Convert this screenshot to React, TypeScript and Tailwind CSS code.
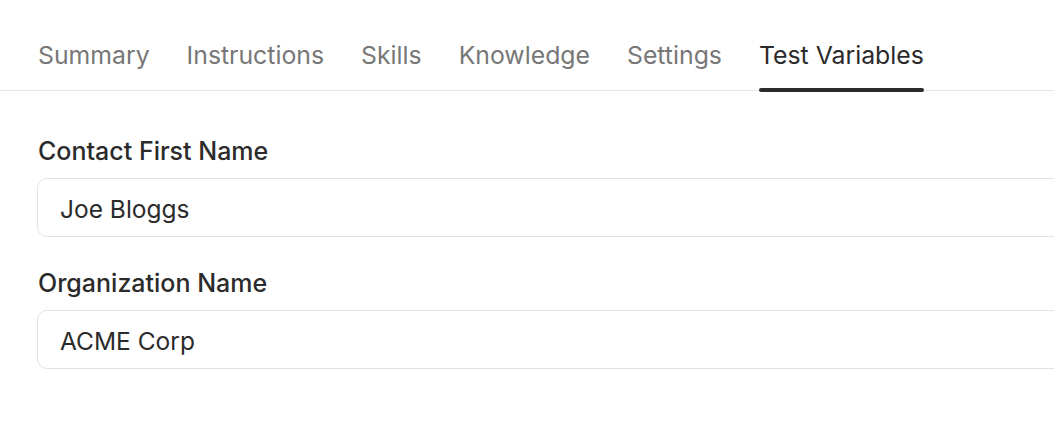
const tabs = ["Summary", "Instructions", "Skills", "Knowledge", "Settings", "Test Variables"];

const fields = [
  { label: "Contact First Name", value: "Joe Bloggs" },
  { label: "Organization Name", value: "ACME Corp" },
];

function App() {
  return (
    <div
      className="w-full h-[430px] overflow-hidden bg-white text-[#2b2b2b]"
      style={{ fontFamily: "Inter, 'Noto Sans', sans-serif" }}
    >
      <nav className="flex gap-[37px] pl-[38px] border-b border-[#e5e5e5]">
        {tabs.map((tab) => {
          const active = tab === "Test Variables";
          return (
            <button
              key={tab}
              className={
                active
                  ? "relative pt-[39px] pb-[19px] text-[24.8px] leading-[32px] text-[#2b2b2b]"
                  : "relative pt-[39px] pb-[19px] text-[24.8px] leading-[32px] text-[#777777]"
              }
            >
              {tab}
              {active && (
                <span className="absolute left-0 right-0 bottom-[-2px] h-1 rounded-full bg-[#2b2b2b]" />
              )}
            </button>
          );
        })}
      </nav>

      <div className="pl-[37px] pt-[44px] flex flex-col gap-[30px]">
        {fields.map((f) => (
          <div key={f.label} className="flex flex-col gap-[11px]">
            <label className="pl-px text-[25px] leading-[32px] font-medium text-[#2b2b2b]">
              {f.label}
            </label>
            <div className="w-[1040px] h-[59px] flex items-center pl-[22px] pt-[3px] rounded-[10px] border border-[#e2e2e2] bg-white">
              <span className="text-[24.5px] leading-[32px] text-[#2b2b2b]">{f.value}</span>
            </div>
          </div>
        ))}
      </div>
    </div>
  );
}

export default App;
